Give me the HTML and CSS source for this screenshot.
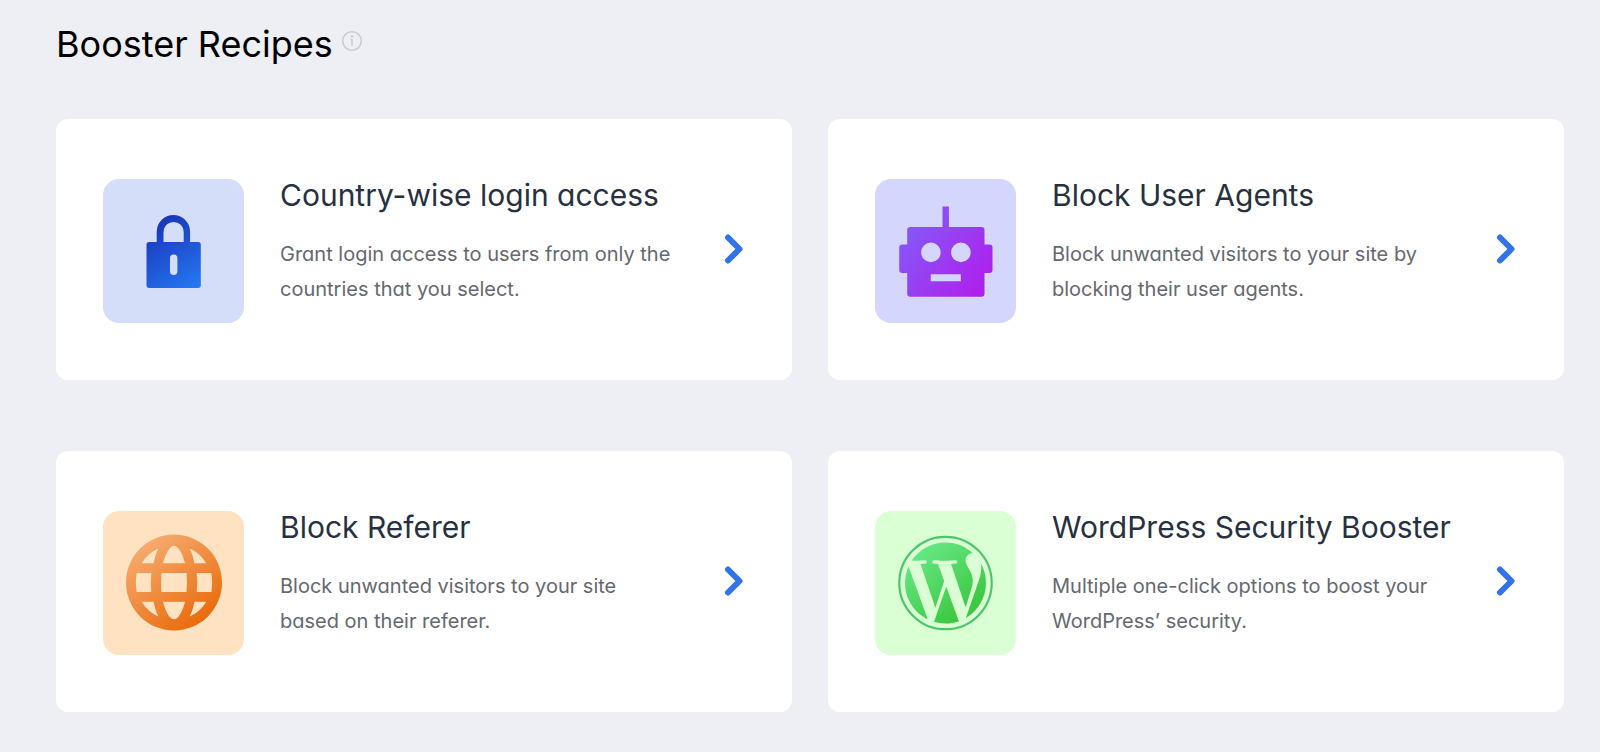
FILE: index.html
```html
<!DOCTYPE html>
<html lang="en">
<head>
    <meta charset="UTF-8">
    <meta name="viewport" content="width=device-width, initial-scale=1.0">
    <title>Booster Recipes</title>
    <link rel="stylesheet" href="styles.css">
</head>
<body>
    <header class="page-header">
        <h1 class="page-title">Booster Recipes</h1>
        <button class="info" type="button" aria-label="Info">
            <svg width="22" height="22" viewBox="0 0 22 22" fill="none" stroke="currentColor">
                <circle cx="11" cy="11" r="9.3" stroke-width="1.6"/>
                <path d="M9.400 9.500H11V16" stroke-width="1.500"/>
                <circle cx="11" cy="6.200" r="1.200" fill="currentColor" stroke="none"/>
            </svg>
        </button>
    </header>

    <main class="recipes">
        <a class="card" href="#">
            <span class="tile tile-blue">
                <svg width="141" height="144" viewBox="0 0 141 144">
                    <defs>
                        <linearGradient id="lock" gradientUnits="userSpaceOnUse" x1="48" y1="38" x2="96" y2="112">
                            <stop offset="0" stop-color="#1730b4"/>
                            <stop offset="1" stop-color="#267bf5"/>
                        </linearGradient>
                    </defs>
                    <path fill="url(#lock)" fill-rule="evenodd" d="M53.7 63V52.7a16.7 16.7 0 0 1 33.4 0V63h8a2.7 2.7 0 0 1 2.7 2.7v40.6a2.7 2.7 0 0 1-2.7 2.7H46.2a2.7 2.7 0 0 1-2.7-2.7V65.7a2.7 2.7 0 0 1 2.7-2.7zM60.5 63h20.2V53a10.1 10.1 0 0 0-20.2 0zM67 79.3v13a3.7 3.7 0 0 0 7.4 0v-13a3.7 3.7 0 0 0-7.4 0z"/>
                </svg>
            </span>
            <span class="card-text">
                <strong class="card-title">Country-wise login access</strong>
                <span class="card-desc">Grant login access to users from only the countries that you select.</span>
            </span>
            <svg class="chevron" width="20" height="30" viewBox="0 0 20 30"><path d="M4 3.500L15.500 15L4 26.500"/></svg>
        </a>

        <a class="card" href="#">
            <span class="tile tile-purple">
                <svg width="141" height="144" viewBox="0.500 0 141 144">
                    <defs>
                        <linearGradient id="robot" gradientUnits="userSpaceOnUse" x1="30" y1="52" x2="108" y2="112">
                            <stop offset="0" stop-color="#8558f8"/>
                            <stop offset="1" stop-color="#b01fec"/>
                        </linearGradient>
                    </defs>
                    <path fill="url(#robot)" fill-rule="evenodd" d="M68 27.4h6.4V48H107a3 3 0 0 1 3 3v14.500h5a3 3 0 0 1 3 3V91a3 3 0 0 1-3 3h-5v20.700a3 3 0 0 1-3 3H35.700a3 3 0 0 1-3-3V94h-5a3 3 0 0 1-3-3V68.500a3 3 0 0 1 3-3h5V51a3 3 0 0 1 3-3H68zM46.600 73.400a9.800 9.800 0 1 0 19.600 0a9.800 9.800 0 1 0-19.600 0zM76.600 73.400a9.800 9.800 0 1 0 19.600 0a9.800 9.800 0 1 0-19.600 0zM56.300 95.200v7h30v-7z"/>
                </svg>
            </span>
            <span class="card-text">
                <strong class="card-title">Block User Agents</strong>
                <span class="card-desc">Block unwanted visitors to your site by blocking their user agents.</span>
            </span>
            <svg class="chevron" width="20" height="30" viewBox="0 0 20 30"><path d="M4 3.500L15.500 15L4 26.500"/></svg>
        </a>

        <a class="card" href="#">
            <span class="tile tile-orange">
                <svg width="141" height="144" viewBox="0 1 141 144">
                    <defs>
                        <linearGradient id="globe" gradientUnits="userSpaceOnUse" x1="40" y1="32" x2="98" y2="114">
                            <stop offset="0" stop-color="#f6ac70"/>
                            <stop offset="1" stop-color="#ea6a0b"/>
                        </linearGradient>
                    </defs>
                    <path fill="url(#globe)" fill-rule="evenodd" d="M23 72.500a48 48 0 1 0 96 0a48 48 0 1 0-96 0zM58.500 63h25q1 9.500 0 19h-25q-1-9.500 0-19zM33.600 63H48.300q-1 9.500 0 19H33.600q-1.600-9.500 0-19zM93.700 63h14.700q1.600 9.500 0 19H93.700q1-9.500 0-19zM60 53.300C63 41.500 67.500 35.700 71 35.700S79 41.500 82 53.300zM60 91.700C63 103.500 67.500 109.300 71 109.300S79 103.500 82 91.700zM38.700 53.300Q45 43 55.300 38.600Q52 45 50.500 53.300zM103.300 53.300Q97 43 86.700 38.600Q90 45 91.500 53.300zM38.700 91.700Q45 102 55.300 106.400Q52 100 50.500 91.700zM103.300 91.700Q97 102 86.700 106.400Q90 100 91.500 91.700z"/>
                </svg>
            </span>
            <span class="card-text">
                <strong class="card-title">Block Referer</strong>
                <span class="card-desc">Block unwanted visitors to your site based on their referer.</span>
            </span>
            <svg class="chevron" width="20" height="30" viewBox="0 0 20 30"><path d="M4 3.500L15.500 15L4 26.500"/></svg>
        </a>

        <a class="card" href="#">
            <span class="tile tile-green">
                <svg width="141" height="144" viewBox="0 1 141 144">
                    <defs>
                        <linearGradient id="wp" gradientUnits="userSpaceOnUse" x1="4" y1="2" x2="19" y2="22">
                            <stop offset="0" stop-color="#69e98a"/>
                            <stop offset="1" stop-color="#37c437"/>
                        </linearGradient>
                    </defs>
                    <circle cx="70.500" cy="73" r="46.200" fill="none" stroke="#4cc66a" stroke-width="2.200"/>
                    <g transform="translate(25.500 28) scale(3.750)">
                        <path fill="url(#wp)" d="M21.469 6.825c.84 1.537 1.318 3.3 1.318 5.175 0 3.979-2.156 7.456-5.363 9.325l3.295-9.527c.615-1.54.82-2.771.82-3.864 0-.405-.026-.78-.07-1.11m-7.981.105c.647-.03 1.232-.105 1.232-.105.582-.075.514-.93-.067-.899 0 0-1.755.135-2.88.135-1.064 0-2.85-.15-2.85-.15-.585-.03-.661.855-.075.885 0 0 .54.061 1.125.09l1.68 4.605-2.37 7.08L5.354 6.900c.649-.03 1.234-.1 1.234-.1.585-.075.516-.93-.065-.896 0 0-1.746.138-2.874.138-.2 0-.438-.008-.69-.015C4.911 3.150 8.235 1.215 12 1.215c2.809 0 5.365 1.072 7.286 2.833-.046-.003-.091-.009-.141-.009-1.060 0-1.812.923-1.812 1.914 0 .89.513 1.643 1.060 2.531.411.72.89 1.643.89 2.977 0 .915-.354 1.994-.821 3.479l-1.075 3.585-3.900-11.610zM12 22.784c-1.059 0-2.081-.153-3.048-.437l3.237-9.406 3.315 9.087c.024.053.05.101.078.149-1.120.393-2.325.607-3.582.607M1.211 12c0-1.564.336-3.050.935-4.390L7.290 21.709C3.694 19.960 1.212 16.271 1.211 12"/>
                    </g>
                </svg>
            </span>
            <span class="card-text">
                <strong class="card-title">WordPress Security Booster</strong>
                <span class="card-desc">Multiple one-click options to boost your WordPress’ security.</span>
            </span>
            <svg class="chevron" width="20" height="30" viewBox="0 0 20 30"><path d="M4 3.500L15.500 15L4 26.500"/></svg>
        </a>
    </main>
</body>
</html>
```
FILE: styles.css
```css
* {
    box-sizing: border-box;
}
body {
    margin: 0;
    padding: 20px 36px 40px 56px;
    background-color: #eeeff5;
    font-family: Inter, Lato, sans-serif;
    font-feature-settings: "cv11";
}
.page-header {
    display: flex;
    align-items: flex-start;
    gap: 8px;
    margin-bottom: 51px;
}
.page-title {
    margin: 0;
    font-size: 36px;
    font-weight: 400;
    line-height: 48px;
    color: #000;
}
.info {
    margin: 10px 0 0;
    padding: 0;
    border: none;
    background: none;
    color: #ccccd0;
    cursor: pointer;
}
.info svg {
    display: block;
}
.recipes {
    display: grid;
    grid-template-columns: 1fr 1fr;
    gap: 71px 36px;
}
.card {
    display: flex;
    align-items: flex-start;
    padding: 60px 48px 57px 47px;
    border-radius: 12px;
    background-color: #fff;
    text-decoration: none;
}
.tile {
    flex: none;
    border-radius: 16px;
    overflow: hidden;
}
.tile svg {
    display: block;
}
.tile-blue {
    background-color: #d5def9;
}
.tile-purple {
    background-color: #d5d6fe;
}
.tile-orange {
    background-color: #ffe2c1;
}
.tile-green {
    background-color: #daffd5;
}
.card-text {
    flex: 1;
    padding: 0 24px 0 36px;
}
.card-title {
    display: block;
    margin-bottom: 26px;
    font-size: 30px;
    font-weight: 400;
    line-height: 32px;
    color: #27303f;
}
.card-desc {
    display: block;
    max-width: 392px;
    font-size: 20px;
    line-height: 35px;
    color: #65686f;
}
.chevron {
    flex: none;
    margin-top: 55px;
    fill: none;
    stroke: #3273ea;
    stroke-width: 6;
    stroke-linecap: round;
    stroke-linejoin: round;
}
```
